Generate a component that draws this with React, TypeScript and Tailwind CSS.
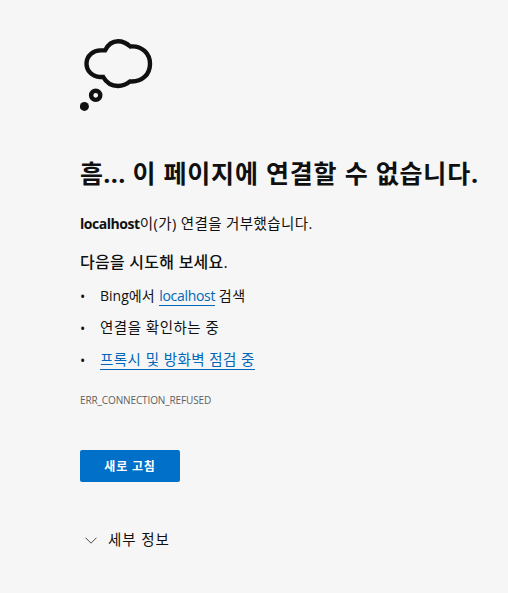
import React from 'react';

const Cloud = () => (
  <svg width="73" height="73" viewBox="0 0 73 73" fill="none" stroke="#101010" strokeWidth="4.4" className="block">
    <path d="M25 11.4 H21 A14 13.3 0 0 0 20 38 H23.2 C26.5 44 32 47 38 47 C42.5 47 46.5 45.5 50 42.4 C62 43.3 70 35.5 70 25 C70 14.5 62 6.6 50.3 7.5 C46.5 4 42.5 2.2 38 2.2 C32.5 2.2 28 5.5 25 11.4 Z" />
    <circle cx="15.7" cy="56.3" r="4.6" />
    <circle cx="4.4" cy="67.4" r="4.5" fill="#101010" stroke="none" />
  </svg>
);

const Bullet = () => <span className="w-5 shrink-0 pt-px text-[14px]">•</span>;

export default function App() {
  return (
    <div className="min-h-screen bg-[#f6f6f6] pl-20 pt-[39px] font-['Open_Sans','Noto_Sans_CJK_KR',sans-serif] text-[14px] text-[#101010] whitespace-nowrap">
      <Cloud />

      <h1 className="mt-[45px] h-8 text-[25px] leading-8 font-bold tracking-[0.8px]">
        <span className="tracking-[0.3px]">흠... </span>이 페이지에 연결할 수 없습니다.
      </h1>

      <p className="mt-[25px] h-5 leading-5">
        <strong className="font-bold tracking-[-0.45px]">localhost</strong>
        <span className="text-[14.5px] tracking-[0.4px]">이(가) 연결을 거부했습니다.</span>
      </p>

      <h2 className="mt-[18px] h-5 text-[16px] leading-5 font-medium tracking-[0.25px]">다음을 시도해 보세요.</h2>

      {/* Suggestions */}
      <ul className="mt-[14px] flex flex-col gap-3 leading-5">
        <li className="flex h-5">
          <Bullet />
          <span>
            Bing에서{' '}
            <a href="#" className="ml-px border-b border-[#0067b8] tracking-[-0.3px] text-[#0067b8]">localhost</a>
            {' '}<span className="tracking-[0.7px]">검색</span>
          </span>
        </li>
        <li className="flex h-5">
          <Bullet />
          <span className="text-[14.5px] tracking-[0.5px]">연결을 확인하는 중</span>
        </li>
        <li className="flex h-5">
          <Bullet />
          <a href="#" className="h-5 border-b border-[#0067b8] text-[14.5px] tracking-[0.46px] text-[#0067b8]">프록시 및 방화벽 점검 중</a>
        </li>
      </ul>

      <div className="mt-[22px] h-4 text-[10px] leading-4 font-medium tracking-[-0.12px] text-[#5f5f5f]">ERR_CONNECTION_REFUSED</div>

      <button className="mt-[42px] flex h-8 w-[100px] items-center justify-center rounded-[2px] bg-[#0070c9] pt-0.5 text-[12px] font-bold tracking-[0.8px] text-white">
        새로 고침
      </button>

      {/* Details toggle */}
      <button className="mt-12 flex h-5 items-center pl-[5px] leading-5">
        <svg width="12" height="7" viewBox="0 0 12 7" fill="none" stroke="#4a4a4a" className="mr-[11px]">
          <path d="M0.5 0.7 L6 6.2 L11.5 0.7" />
        </svg>
        <span className="text-[14.5px] tracking-[0.9px]">세부 정보</span>
      </button>
    </div>
  );
}
